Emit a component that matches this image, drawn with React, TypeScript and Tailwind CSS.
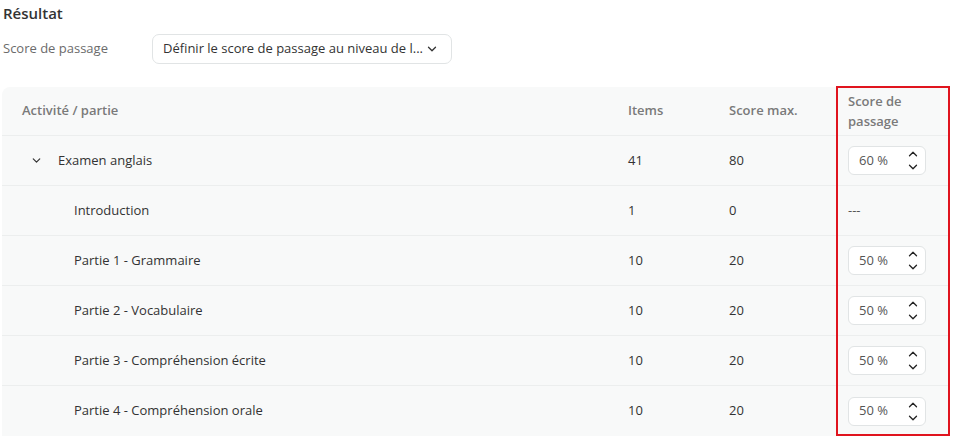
import { ChevronDown, ChevronUp } from "lucide-react";

type Row = {
  name: string;
  items: string;
  max: string;
  score: string | null;
  parent?: boolean;
};

const rows: Row[] = [
  { name: "Examen anglais", items: "41", max: "80", score: "60", parent: true },
  { name: "Introduction", items: "1", max: "0", score: null },
  { name: "Partie 1 - Grammaire", items: "10", max: "20", score: "50" },
  { name: "Partie 2 - Vocabulaire", items: "10", max: "20", score: "50" },
  { name: "Partie 3 - Compréhension écrite", items: "10", max: "20", score: "50" },
  { name: "Partie 4 - Compréhension orale", items: "10", max: "20", score: "50" },
];

const cols = "grid grid-cols-[610px_101px_119px_116px]";

const ScoreInput = ({ value }: { value: string }) => {
  return (
    <div className="flex items-center justify-between w-[78px] h-[29px] bg-white border border-[#e1e4e5] rounded-[6px] pl-[10px] pr-[5px]">
      <span className="text-[13px] text-[#555]">{value} %</span>
      <div className="flex flex-col items-center -space-y-[1px] text-[#222]">
        <ChevronUp size={14} strokeWidth={2.2} />
        <ChevronDown size={14} strokeWidth={2.2} />
      </div>
    </div>
  );
};

const App = () => {
  return (
    <div className="relative w-[957px] h-[437px] bg-white font-['Open_Sans',sans-serif] overflow-hidden">
      {/* HEADER */}
      <div className="pl-[3px] pt-[2px]">
        <h2 className="text-[15px] leading-[22px] font-semibold text-[#333]">Résultat</h2>
        <div className="flex items-center mt-[10px]">
          <span className="w-[149px] text-[13px] text-[#6b6b6b]">Score de passage</span>
          <div className="flex items-center justify-between w-[300px] h-[30px] border border-[#e1e4e5] rounded-[7px] pl-[10px] pr-[12px]">
            <span className="text-[13px] text-[#333] whitespace-nowrap">Définir le score de passage au niveau de l...</span>
            <ChevronDown size={14} strokeWidth={2.2} className="text-[#333]" />
          </div>
        </div>
      </div>

      {/* TABLE */}
      <div className="mt-[23px] ml-[2px] w-[946px] bg-[#f8f9f9] rounded-tl-[8px]">
        <div className={`${cols} h-[49px] items-center text-[13px] font-semibold text-[#7a7a7a] border-b border-[#eceeee]`}>
          <div className="pl-[20px]">Activité / partie</div>
          <div className="pl-[16px]">Items</div>
          <div className="pl-[16px]">Score max.</div>
          <div className="pl-[16px] leading-[20px] w-[80px]">Score de passage</div>
        </div>
        {rows.map((r, i) => (
          <div
            key={r.name}
            className={`${cols} h-[50px] items-center text-[13px] text-[#333] ${i < rows.length - 1 ? "border-b border-[#eceeee]" : ""}`}
          >
            {r.parent ? (
              <div className="flex items-center pl-[28px]">
                <ChevronDown size={13} strokeWidth={2.2} className="text-[#333]" />
                <span className="ml-[15px]">{r.name}</span>
              </div>
            ) : (
              <div className="pl-[72px]">{r.name}</div>
            )}
            <div className="pl-[16px]">{r.items}</div>
            <div className="pl-[16px]">{r.max}</div>
            <div className="pl-[16px]">
              {r.score ? <ScoreInput value={r.score} /> : <span className="text-[#555]">---</span>}
            </div>
          </div>
        ))}
      </div>

      {/* highlight box */}
      <div className="absolute left-[836px] top-[86px] w-[114px] h-[350px] border-2 border-[#e0141e]" />
    </div>
  );
};

export default App;
